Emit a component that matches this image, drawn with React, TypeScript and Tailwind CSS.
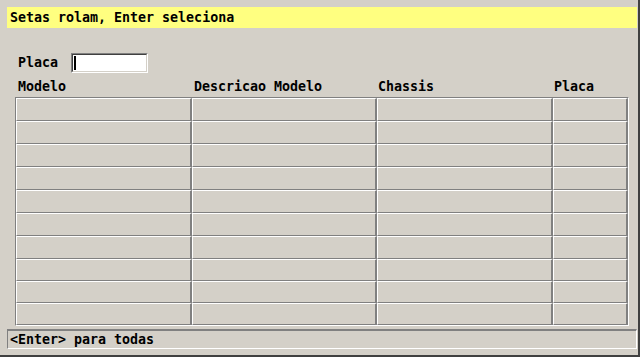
const rows = Array.from({ length: 10 }, (_, i) => i);
const cols = ["Modelo", "Descricao Modelo", "Chassis", "Placa"];

const mono = { fontFamily: '"DejaVu Sans Mono", "Liberation Mono", monospace' };

export default function App() {
  return (
    <div
      className="w-[640px] h-[357px] bg-[#d4d0c8] border-r-2 border-b-2 border-r-[#404040] border-b-[#404040] flex flex-col pl-[7px] pr-[1px] pt-[7px] text-black font-bold text-[13.3px] leading-none"
      style={mono}
    >
      {/* hint bar */}
      <div className="h-[21px] bg-[#ffff80] flex items-center pl-[3px]">
        Setas rolam, Enter seleciona
      </div>

      {/* filtro placa */}
      <div className="flex items-center mt-[25px] pl-[11px] h-[20px]">
        <span className="w-[53px]">Placa</span>
        <div className="w-[77px] h-[20px] bg-white border-t border-l border-t-[#808080] border-l-[#808080] border-b border-r border-b-white border-r-white">
          <div className="w-full h-full border-t border-l border-t-[#404040] border-l-[#404040] border-b border-r border-b-[#d4d0c8] border-r-[#d4d0c8] pl-[1px] pt-[1px]">
            <div className="w-[2px] h-[14px] bg-black" />
          </div>
        </div>
      </div>

      {/* cabecalho */}
      <div className="grid grid-cols-[176px_184px_176px_76px] pl-[9px] mt-[5px] h-[17px] items-center">
        {cols.map((c) => (
          <div key={c} className="pl-[2px]">
            {c}
          </div>
        ))}
      </div>

      {/* grade */}
      <div className="mt-[2px] ml-[8px] w-[614px] border-t border-l border-t-[#808080] border-l-[#808080] border-b border-r border-b-white border-r-white">
        {rows.map((r) => (
          <div key={r} className="grid grid-cols-[176px_185px_176px_75px]">
            {cols.map((c) => (
              <div
                key={c}
                className={
                  (r < 7 ? "h-[23px]" : "h-[22px]") +
                  " border-t border-l border-t-white border-l-white border-b border-b-[#808080] border-r-2 border-r-[#808080]"
                }
              />
            ))}
          </div>
        ))}
      </div>

      {/* rodape */}
      <div className="mt-[3px] h-[20px] w-[630px] border-t-2 border-l border-t-[#808080] border-l-[#808080] border-b border-r border-b-white border-r-white flex items-center pl-[2px]">
        {"<Enter> para todas"}
      </div>
    </div>
  );
}
